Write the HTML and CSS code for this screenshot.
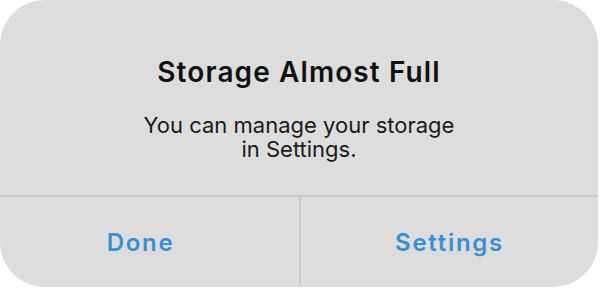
FILE: index.html
```html
<!DOCTYPE html>
<html lang="en">
<head>
<meta charset="utf-8">
<title>Storage Almost Full</title>
<link rel="stylesheet" href="styles.css">
</head>
<body>
<div class="alert" role="alertdialog">
  <div class="alert-content">
    <h1 class="alert-title">Storage Almost Full</h1>
    <p class="alert-message">You can manage your storage<br>in Settings.</p>
  </div>
  <div class="alert-actions">
    <button class="alert-btn alert-btn-cancel">Done</button>
    <button class="alert-btn">Settings</button>
  </div>
</div>
</body>
</html>
```
FILE: styles.css
```css
html, body {
  margin: 0;
  padding: 0;
  background: #ffffff;
}
body {
  width: 600px;
  height: 288px;
  font-family: Inter, "Noto Sans", sans-serif;
}
.alert {
  width: 598px;
  height: 287px;
  background: #dddddd;
  border-radius: 45px;
  display: flex;
  flex-direction: column;
  overflow: hidden;
}
.alert-content {
  height: 197px;
  box-sizing: border-box;
  padding-top: 55px;
  text-align: center;
  border-bottom: 2px solid #c9c9c9;
}
.alert-title {
  margin: 0;
  font-size: 28px;
  line-height: 34px;
  font-weight: 600;
  letter-spacing: 1.1px;
  color: #111111;
}
.alert-message {
  margin: 24px 0 0;
  font-size: 22px;
  line-height: 24px;
  font-weight: 400;
  color: #1a1a1a;
}
.alert-actions {
  flex: 1;
  display: grid;
  grid-template-columns: 1fr 1fr;
}
.alert-btn {
  background: transparent;
  border: 0;
  margin: 0;
  padding: 0;
  font-family: inherit;
  font-size: 24px;
  font-weight: 600;
  letter-spacing: 1.7px;
  color: #3a8fd2;
  cursor: pointer;
}
.alert-btn-cancel {
  padding-right: 18px;
}
.alert-btn + .alert-btn {
  border-left: 2px solid #c9c9c9;
}
```
